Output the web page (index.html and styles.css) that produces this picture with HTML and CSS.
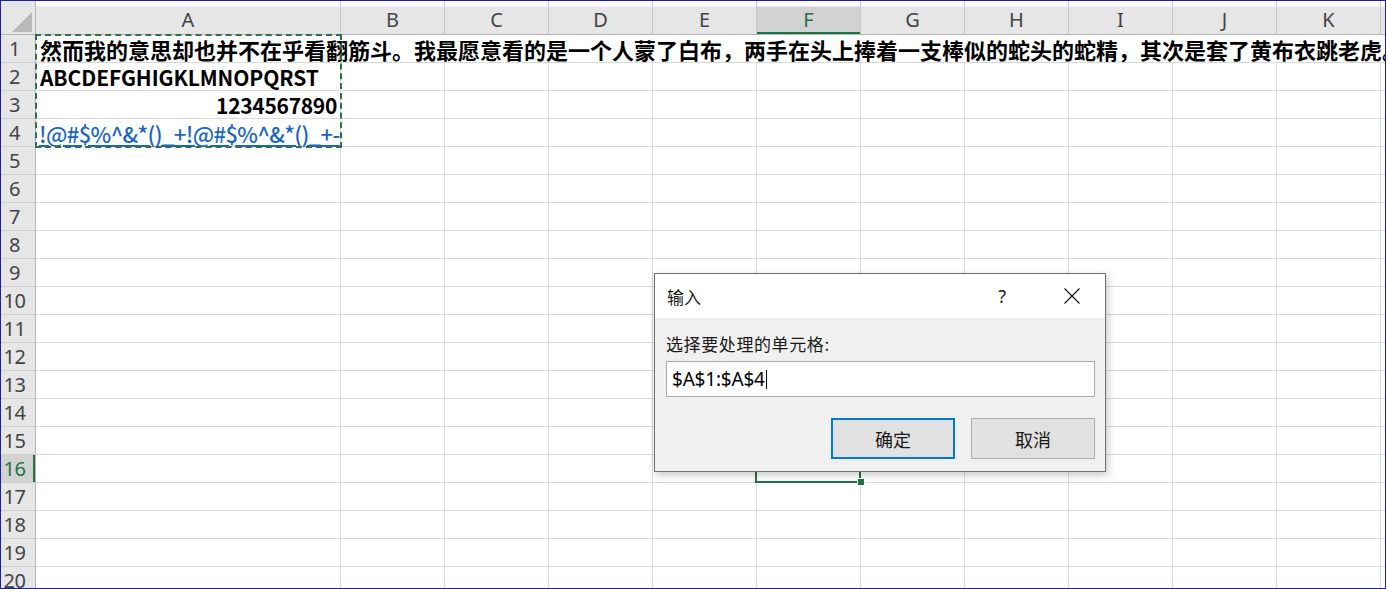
FILE: index.html
```html
<!DOCTYPE html>
<html lang="zh-CN">
<head>
<meta charset="utf-8">
<title>Excel</title>
<link rel="stylesheet" href="styles.css">
</head>
<body>
<div class="screen">
  <div class="sheet">
    <div class="hdr-row">
      <div class="corner"><svg width="22" height="22" viewBox="0 0 22 22"><polygon points="21,1 21,21 1,21" fill="#b9b9b9"/></svg></div>
      <div class="colhdr col-a">A</div>
      <div class="colhdr">B</div>
      <div class="colhdr">C</div>
      <div class="colhdr">D</div>
      <div class="colhdr">E</div>
      <div class="colhdr sel">F</div>
      <div class="colhdr">G</div>
      <div class="colhdr">H</div>
      <div class="colhdr">I</div>
      <div class="colhdr">J</div>
      <div class="colhdr">K</div>
      <div class="colhdr rest"></div>
    </div>

    <div class="row">
      <div class="rowhdr">1</div>
      <div class="cell wide cjk-bold">然而我的意思却也并不在乎看翻筋斗。我最愿意看的是一个人蒙了白布，两手在头上捧着一支棒似的蛇头的蛇精，其次是套了黄布衣跳老虎。</div>
    </div>
    <div class="row">
      <div class="rowhdr">2</div>
      <div class="cell col-a latin-bold">ABCDEFGHIGKLMNOPQRST</div>
      <div class="cell"></div><div class="cell"></div><div class="cell"></div><div class="cell"></div><div class="cell"></div><div class="cell"></div><div class="cell"></div><div class="cell"></div><div class="cell"></div><div class="cell"></div><div class="cell rest"></div>
    </div>
    <div class="row">
      <div class="rowhdr">3</div>
      <div class="cell col-a latin-bold right">1234567890</div>
      <div class="cell"></div><div class="cell"></div><div class="cell"></div><div class="cell"></div><div class="cell"></div><div class="cell"></div><div class="cell"></div><div class="cell"></div><div class="cell"></div><div class="cell"></div><div class="cell rest"></div>
    </div>
    <div class="row">
      <div class="rowhdr">4</div>
      <div class="cell col-a link">!@#$%^&amp;*()_+!@#$%^&amp;*()_+-</div>
      <div class="cell"></div><div class="cell"></div><div class="cell"></div><div class="cell"></div><div class="cell"></div><div class="cell"></div><div class="cell"></div><div class="cell"></div><div class="cell"></div><div class="cell"></div><div class="cell rest"></div>
    </div>

    <div class="row"><div class="rowhdr">5</div><div class="cell col-a"></div><div class="cell"></div><div class="cell"></div><div class="cell"></div><div class="cell"></div><div class="cell"></div><div class="cell"></div><div class="cell"></div><div class="cell"></div><div class="cell"></div><div class="cell"></div><div class="cell rest"></div></div>
    <div class="row"><div class="rowhdr">6</div><div class="cell col-a"></div><div class="cell"></div><div class="cell"></div><div class="cell"></div><div class="cell"></div><div class="cell"></div><div class="cell"></div><div class="cell"></div><div class="cell"></div><div class="cell"></div><div class="cell"></div><div class="cell rest"></div></div>
    <div class="row"><div class="rowhdr">7</div><div class="cell col-a"></div><div class="cell"></div><div class="cell"></div><div class="cell"></div><div class="cell"></div><div class="cell"></div><div class="cell"></div><div class="cell"></div><div class="cell"></div><div class="cell"></div><div class="cell"></div><div class="cell rest"></div></div>
    <div class="row"><div class="rowhdr">8</div><div class="cell col-a"></div><div class="cell"></div><div class="cell"></div><div class="cell"></div><div class="cell"></div><div class="cell"></div><div class="cell"></div><div class="cell"></div><div class="cell"></div><div class="cell"></div><div class="cell"></div><div class="cell rest"></div></div>
    <div class="row"><div class="rowhdr">9</div><div class="cell col-a"></div><div class="cell"></div><div class="cell"></div><div class="cell"></div><div class="cell"></div><div class="cell"></div><div class="cell"></div><div class="cell"></div><div class="cell"></div><div class="cell"></div><div class="cell"></div><div class="cell rest"></div></div>
    <div class="row"><div class="rowhdr">10</div><div class="cell col-a"></div><div class="cell"></div><div class="cell"></div><div class="cell"></div><div class="cell"></div><div class="cell"></div><div class="cell"></div><div class="cell"></div><div class="cell"></div><div class="cell"></div><div class="cell"></div><div class="cell rest"></div></div>
    <div class="row"><div class="rowhdr">11</div><div class="cell col-a"></div><div class="cell"></div><div class="cell"></div><div class="cell"></div><div class="cell"></div><div class="cell"></div><div class="cell"></div><div class="cell"></div><div class="cell"></div><div class="cell"></div><div class="cell"></div><div class="cell rest"></div></div>
    <div class="row"><div class="rowhdr">12</div><div class="cell col-a"></div><div class="cell"></div><div class="cell"></div><div class="cell"></div><div class="cell"></div><div class="cell"></div><div class="cell"></div><div class="cell"></div><div class="cell"></div><div class="cell"></div><div class="cell"></div><div class="cell rest"></div></div>
    <div class="row"><div class="rowhdr">13</div><div class="cell col-a"></div><div class="cell"></div><div class="cell"></div><div class="cell"></div><div class="cell"></div><div class="cell"></div><div class="cell"></div><div class="cell"></div><div class="cell"></div><div class="cell"></div><div class="cell"></div><div class="cell rest"></div></div>
    <div class="row"><div class="rowhdr">14</div><div class="cell col-a"></div><div class="cell"></div><div class="cell"></div><div class="cell"></div><div class="cell"></div><div class="cell"></div><div class="cell"></div><div class="cell"></div><div class="cell"></div><div class="cell"></div><div class="cell"></div><div class="cell rest"></div></div>
    <div class="row"><div class="rowhdr">15</div><div class="cell col-a"></div><div class="cell"></div><div class="cell"></div><div class="cell"></div><div class="cell"></div><div class="cell"></div><div class="cell"></div><div class="cell"></div><div class="cell"></div><div class="cell"></div><div class="cell"></div><div class="cell rest"></div></div>
    <div class="row"><div class="rowhdr sel">16</div><div class="cell col-a"></div><div class="cell"></div><div class="cell"></div><div class="cell"></div><div class="cell"></div><div class="cell active"><span class="handle"></span></div><div class="cell"></div><div class="cell"></div><div class="cell"></div><div class="cell"></div><div class="cell"></div><div class="cell rest"></div></div>
    <div class="row"><div class="rowhdr">17</div><div class="cell col-a"></div><div class="cell"></div><div class="cell"></div><div class="cell"></div><div class="cell"></div><div class="cell"></div><div class="cell"></div><div class="cell"></div><div class="cell"></div><div class="cell"></div><div class="cell"></div><div class="cell rest"></div></div>
    <div class="row"><div class="rowhdr">18</div><div class="cell col-a"></div><div class="cell"></div><div class="cell"></div><div class="cell"></div><div class="cell"></div><div class="cell"></div><div class="cell"></div><div class="cell"></div><div class="cell"></div><div class="cell"></div><div class="cell"></div><div class="cell rest"></div></div>
    <div class="row"><div class="rowhdr">19</div><div class="cell col-a"></div><div class="cell"></div><div class="cell"></div><div class="cell"></div><div class="cell"></div><div class="cell"></div><div class="cell"></div><div class="cell"></div><div class="cell"></div><div class="cell"></div><div class="cell"></div><div class="cell rest"></div></div>
    <div class="row"><div class="rowhdr">20</div><div class="cell col-a"></div><div class="cell"></div><div class="cell"></div><div class="cell"></div><div class="cell"></div><div class="cell"></div><div class="cell"></div><div class="cell"></div><div class="cell"></div><div class="cell"></div><div class="cell"></div><div class="cell rest"></div></div>

    <div class="marquee"></div>
  </div>

  <div class="dialog">
    <div class="dlg-title">
      <span class="dlg-name">输入</span>
      <span class="dlg-help">?</span>
      <svg class="dlg-close" width="16" height="16" viewBox="0 0 16 16"><path d="M0.5 0.5 L15.5 15.5 M15.5 0.5 L0.5 15.5" stroke="#111" stroke-width="1.1" fill="none"/></svg>
    </div>
    <div class="dlg-body">
      <div class="dlg-label">选择要处理的单元格:</div>
      <div class="dlg-input"><span class="dlg-value">$A$1:$A$4</span><span class="caret"></span></div>
      <div class="dlg-buttons">
        <div class="btn btn-primary">确定</div>
        <div class="btn">取消</div>
      </div>
    </div>
  </div>
</div>
</body>
</html>
```

FILE: styles.css
```css
html, body {
  margin: 0;
  padding: 0;
  background: #ffffff;
}

.screen {
  position: relative;
  width: 1386px;
  height: 589px;
  box-sizing: border-box;
  border: 1px solid #1f1fa6;
  overflow: hidden;
  background: #ffffff;
}

.sheet {
  position: relative;
  display: flex;
  flex-direction: column;
  font-family: "Noto Sans", "Noto Sans CJK SC", sans-serif;
}

/* header row */
.hdr-row {
  display: flex;
  height: 33px;
  border-bottom: 1px solid #b4b4b4;
  flex: none;
}

.corner {
  width: 35px;
  flex: none;
  background: #e6e6e6;
  border-right: 1px solid #b4b4b4;
  display: flex;
  align-items: flex-end;
  justify-content: flex-end;
  padding: 0 2px 1px 0;
  box-sizing: border-box;
}

.colhdr {
  width: 104px;
  flex: none;
  box-sizing: border-box;
  border-right: 1px solid #c8c8c8;
  background: linear-gradient(#fbfbfb 0, #fbfbfb 5px, #e6e6e6 6px);
  color: #444;
  font-size: 20px;
  line-height: 20px;
  display: flex;
  align-items: flex-end;
  justify-content: center;
  padding-bottom: 4px;
}

.colhdr.col-a { width: 305px; }

.colhdr.rest {
  flex: 1;
  width: auto;
  border-right: none;
}

.colhdr.sel {
  background: linear-gradient(#fbfbfb 0, #fbfbfb 5px, #d2d2d2 6px);
  color: #217346;
  box-shadow: inset 0 -2px 0 #217346;
}

/* rows */
.row {
  display: flex;
  height: 28px;
  flex: none;
}

.rowhdr {
  width: 35px;
  flex: none;
  box-sizing: border-box;
  background: #e6e6e6;
  border-right: 1px solid #b4b4b4;
  border-bottom: 1px solid #d0d0d0;
  color: #444;
  font-size: 20px;
  line-height: 28px;
  text-align: center;
  padding-right: 7px;
  letter-spacing: -0.5px;
}

.rowhdr.sel {
  background: #d2d2d2;
  color: #217346;
  box-shadow: inset -2px 0 0 #217346;
}

.cell {
  width: 104px;
  flex: none;
  box-sizing: border-box;
  border-right: 1px solid #d9d9d9;
  border-bottom: 1px solid #d9d9d9;
  position: relative;
  white-space: nowrap;
  display: flex;
  align-items: flex-end;
  color: #000;
}

.cell.col-a { width: 305px; }

.cell.rest {
  flex: 1;
  width: auto;
  border-right: none;
}

.cell.wide {
  flex: 1;
  width: auto;
  border-right: none;
  overflow: hidden;
  padding-left: 4px;
}

.cjk-bold {
  font-family: "Noto Sans CJK SC", sans-serif;
  font-weight: 700;
  font-size: 22px;
  line-height: 25px;
}

.latin-bold {
  font-family: "Noto Sans CJK SC", sans-serif;
  font-weight: 700;
  font-size: 21px;
  line-height: 25px;
  padding-left: 4px;
  letter-spacing: -0.1px;
}

.latin-bold.right {
  justify-content: flex-end;
  padding-left: 0;
  padding-right: 3px;
  letter-spacing: -0.3px;
}

.link {
  font-family: "Noto Sans CJK SC", sans-serif;
  font-weight: 500;
  font-size: 22px;
  line-height: 25px;
  color: #1a67c0;
  text-decoration: underline;
  text-underline-offset: 2px;
  padding-left: 3px;
  letter-spacing: -0.6px;
}

/* active cell */
.cell.active::after {
  content: "";
  position: absolute;
  left: -2px;
  top: -2px;
  right: -1px;
  bottom: -1px;
  border: 2px solid #217346;
}

.handle {
  position: absolute;
  right: -5px;
  bottom: -4px;
  width: 6px;
  height: 6px;
  background: #217346;
  border: 1px solid #fff;
  z-index: 2;
}

/* copy marquee */
.marquee {
  position: absolute;
  left: 34px;
  top: 33px;
  width: 307px;
  height: 114px;
  box-sizing: border-box;
  border: 2px dashed #2f6f4c;
  pointer-events: none;
}

/* dialog */
.dialog {
  position: absolute;
  left: 653px;
  top: 272px;
  width: 452px;
  height: 199px;
  box-sizing: border-box;
  border: 1px solid #707070;
  background: #f0f0f0;
  box-shadow: 2px 3px 8px rgba(0, 0, 0, 0.22);
  display: flex;
  flex-direction: column;
  font-family: "Noto Sans CJK SC", sans-serif;
  color: #1a1a1a;
}

.dlg-title {
  height: 44px;
  flex: none;
  background: #ffffff;
  display: flex;
  align-items: center;
  padding-left: 12px;
  padding-right: 25px;
}

.dlg-name {
  font-size: 17px;
  flex: 1;
}

.dlg-help {
  font-family: "Noto Sans", sans-serif;
  font-size: 18px;
  color: #222;
  margin-right: 58px;
}

.dlg-close {
  display: block;
}

.dlg-body {
  flex: 1;
  display: flex;
  flex-direction: column;
  padding: 14px 10px 12px 11px;
}

.dlg-label {
  font-size: 17px;
  line-height: 24px;
  letter-spacing: 0.6px;
}

.dlg-input {
  margin-top: 5px;
  height: 36px;
  box-sizing: border-box;
  background: #ffffff;
  border: 1px solid #a9a9a9;
  display: flex;
  align-items: center;
  padding-left: 5px;
}

.dlg-value {
  font-family: "Noto Sans", sans-serif;
  font-size: 19px;
  color: #000;
  letter-spacing: -0.2px;
}

.caret {
  display: inline-block;
  width: 1px;
  height: 19px;
  background: #000;
  margin-left: 1px;
}

.dlg-buttons {
  margin-top: 21px;
  display: flex;
  justify-content: flex-end;
  gap: 16px;
}

.btn {
  width: 124px;
  height: 41px;
  box-sizing: border-box;
  background: #e1e1e1;
  border: 1px solid #adadad;
  display: flex;
  align-items: center;
  justify-content: center;
  font-size: 18px;
}

.btn-primary {
  border: 2px solid #0078d7;
}
```
